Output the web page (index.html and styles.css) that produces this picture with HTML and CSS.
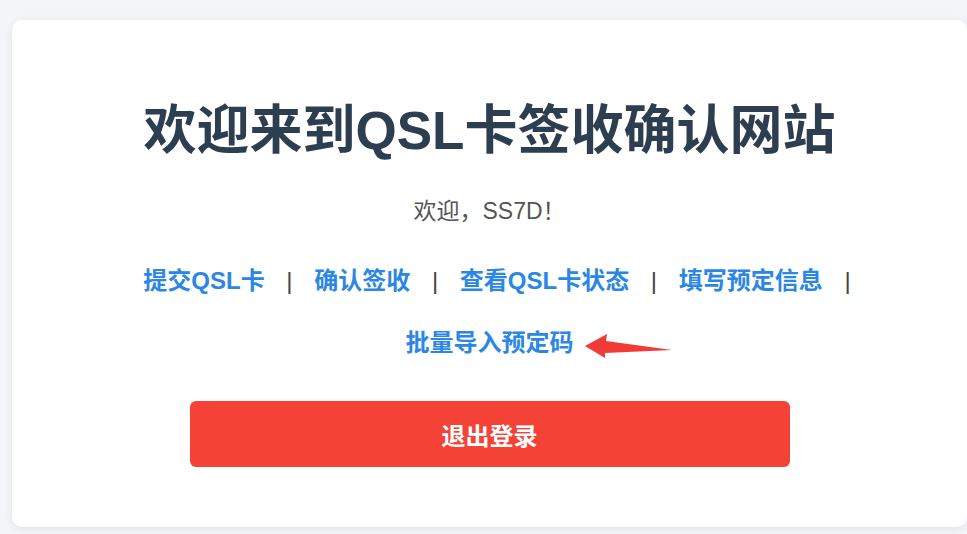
FILE: index.html
```html
<!DOCTYPE html>
<html lang="zh-CN">
<head>
    <meta charset="UTF-8">
    <meta name="viewport" content="width=device-width, initial-scale=1.0">
    <title>QSL卡签收确认网站</title>
    <link rel="stylesheet" href="styles.css">
</head>
<body>
    <div class="container">
        <h1>欢迎来到QSL卡签收确认网站</h1>
        <p class="welcome">欢迎，SS7D！</p>
        <div class="nav">
            <a href="#">提交QSL卡</a> |
            <a href="#">确认签收</a> |
            <a href="#">查看QSL卡状态</a> |
            <a href="#">填写预定信息</a> |
            <a href="#" class="marked">批量导入预定码<svg class="arrow" width="92" height="32" viewBox="0 0 92 32"><polygon points="2,19 24,7 23,14 89,23 22,26 22,31" fill="#f23b36"/></svg></a>
        </div>
        <button class="logout-button">退出登录</button>
    </div>
</body>
</html>
```

FILE: styles.css
```css
html, body {
    margin: 0;
    overflow: hidden;
}
body {
    font-family: 'Liberation Sans', 'Noto Sans CJK SC', sans-serif;
    background-color: #f3f5f8;
    padding: 20px 0 0 12px;
    height: 534px;
    box-sizing: border-box;
}
.container {
    background-color: #ffffff;
    border-radius: 10px;
    box-shadow: 0 2px 10px rgba(0, 0, 0, 0.08);
    width: 955px;
    box-sizing: border-box;
    padding: 80px 40px 60px;
    text-align: center;
}
h1 {
    margin: 0;
    font-size: 53px;
    line-height: 62px;
    font-weight: bold;
    color: #2c3e50;
}
.welcome {
    margin: 33px 0 0;
    font-size: 23px;
    line-height: 33px;
    color: #555;
}
.nav {
    margin-top: 22px;
    font-size: 24px;
    line-height: 62px;
    color: #444;
}
.nav a {
    margin: 0 15px;
    color: #2b87e3;
    font-weight: bold;
    text-decoration: none;
    white-space: nowrap;
}
.nav a.marked {
    position: relative;
}
.arrow {
    position: absolute;
    left: calc(100% + 9px);
    top: 50%;
    margin-top: -16px;
}
.logout-button {
    display: block;
    width: 600px;
    height: 66px;
    margin: 27px auto 0;
    border: none;
    border-radius: 6px;
    background-color: #f44336;
    color: white;
    font-family: inherit;
    font-size: 24px;
    font-weight: bold;
    cursor: pointer;
}
```
